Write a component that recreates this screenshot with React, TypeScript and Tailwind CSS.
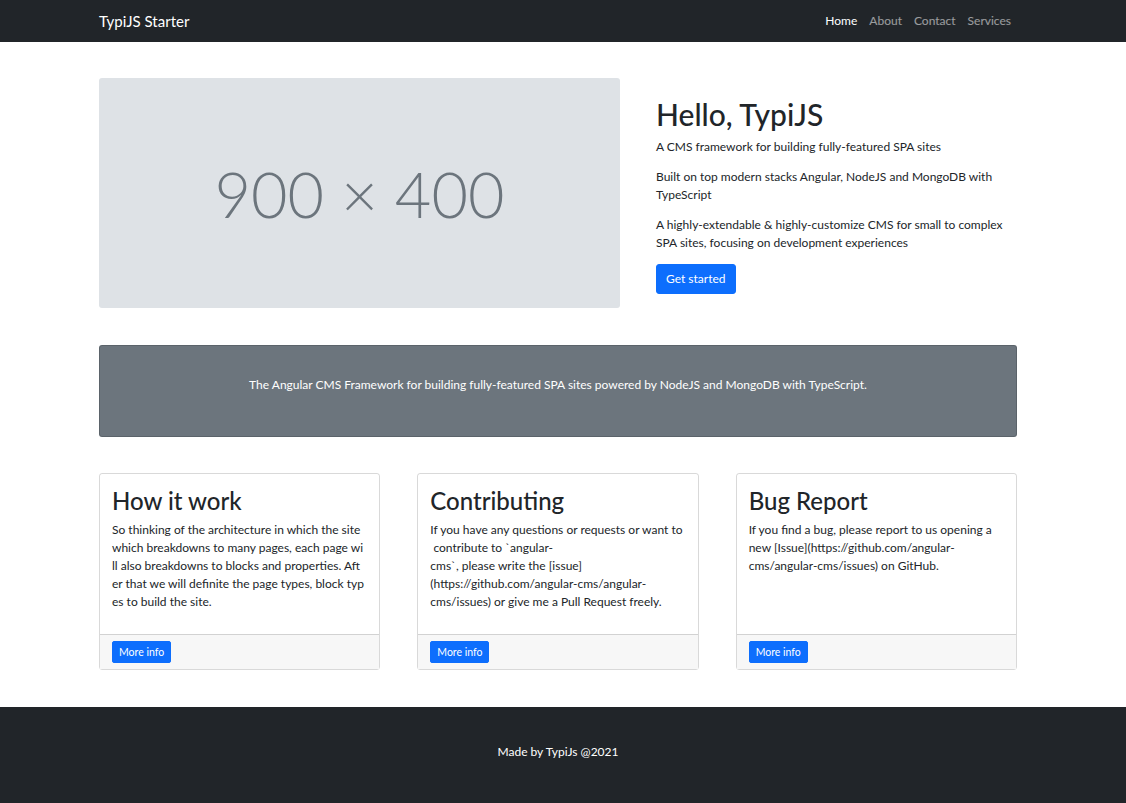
import React from 'react';

const font = { fontFamily: '"Segoe UI", Lato, "Liberation Sans", sans-serif' };

const cards = [
  {
    title: 'How it work',
    lines: [
      'So thinking of the architecture in which the site',
      'which breakdowns to many pages, each page wi',
      'll also breakdowns to blocks and properties. Aft',
      'er that we will definite the page types, block typ',
      'es to build the site.',
    ],
  },
  {
    title: 'Contributing',
    lines: [
      'If you have any questions or requests or want to',
      '\u00a0contribute to `angular-',
      'cms`, please write the [issue]',
      '(https://github.com/angular-cms/angular-',
      'cms/issues) or give me a Pull Request freely.',
    ],
  },
  {
    title: 'Bug Report',
    lines: [
      'If you find a bug, please report to us opening a',
      'new [Issue](https://github.com/angular-',
      'cms/angular-cms/issues) on GitHub.',
    ],
  },
];

export default function App() {
  return (
    <div className="min-h-screen bg-white text-[#212529] text-[12px] leading-[18px]" style={font}>
      {/* Navbar */}
      <header className="bg-[#212529] h-[42px]">
        <div className="w-[1116px] h-full">
          <div className="w-[918px] mx-auto h-full flex items-center justify-between">
            <a className="text-white text-[15px] leading-[22px]">TypiJS Starter</a>
            <nav className="flex">
              <a className="px-[6px] text-white">Home</a>
              <a className="px-[6px] text-white/55">About</a>
              <a className="px-[6px] text-white/55">Contact</a>
              <a className="px-[6px] text-white/55">Services</a>
            </nav>
          </div>
        </div>
      </header>

      <div className="w-[1116px]">
        <main className="w-[918px] mx-auto">
          {/* Hero */}
          <section className="flex items-center gap-[36px] mt-[36px]">
            <div className="w-[521px] h-[230px] shrink-0 bg-[#dee2e6] rounded-[3px] flex items-center justify-center">
              <span className="text-[#6c757d] text-[63px] leading-none font-light">900 × 400</span>
            </div>
            <div className="flex-1 pt-[3px]">
              <h1 className="text-[30px] leading-[36px] font-medium mb-[6px]">Hello, TypiJS</h1>
              <p className="mb-[12px]">A CMS framework for building fully-featured SPA sites</p>
              <p className="mb-[12px]">Built on top modern stacks Angular, NodeJS and MongoDB with TypeScript</p>
              <p className="mb-[12px]">A highly-extendable &amp; highly-customize CMS for small to complex SPA sites, focusing on development experiences</p>
              <button className="bg-[#0d6efd] text-white rounded-[3px] px-[9px] py-[5px] border border-[#0d6efd]">Get started</button>
            </div>
          </section>

          {/* Banner */}
          <section className="mt-[37px] bg-[#6c757d] border border-black/15 rounded-[3px] py-[30px] text-center text-white">
            <p className="mb-[12px]">The Angular CMS Framework for building fully-featured SPA sites powered by NodeJS and MongoDB with TypeScript.</p>
          </section>

          {/* Cards */}
          <section className="grid grid-cols-3 gap-[37px] mt-[36px]">
            {cards.map((c) => (
              <div key={c.title} className="flex flex-col border border-black/15 rounded-[3px] h-[197px]">
                <div className="flex-1 p-[12px]">
                  <h2 className="text-[24px] leading-[29px] font-medium mb-[6px]">{c.title}</h2>
                  <p className="whitespace-nowrap">
                    {c.lines.map((l, i) => (
                      <React.Fragment key={i}>
                        {l}
                        {i < c.lines.length - 1 && <br />}
                      </React.Fragment>
                    ))}
                  </p>
                </div>
                <div className="bg-[#f7f7f7] border-t border-black/15 px-[12px] py-[6px]">
                  <button className="bg-[#0d6efd] text-white rounded-[2px] px-[6px] py-[2px] text-[10.5px] leading-[16px] border border-[#0d6efd]">More info</button>
                </div>
              </div>
            ))}
          </section>
        </main>
      </div>

      {/* Footer */}
      <footer className="bg-[#212529] mt-[37px] pt-[36px] pb-[42px] text-white">
        <p className="w-[1116px] text-center">Made by TypiJs @2021</p>
      </footer>
    </div>
  );
}
